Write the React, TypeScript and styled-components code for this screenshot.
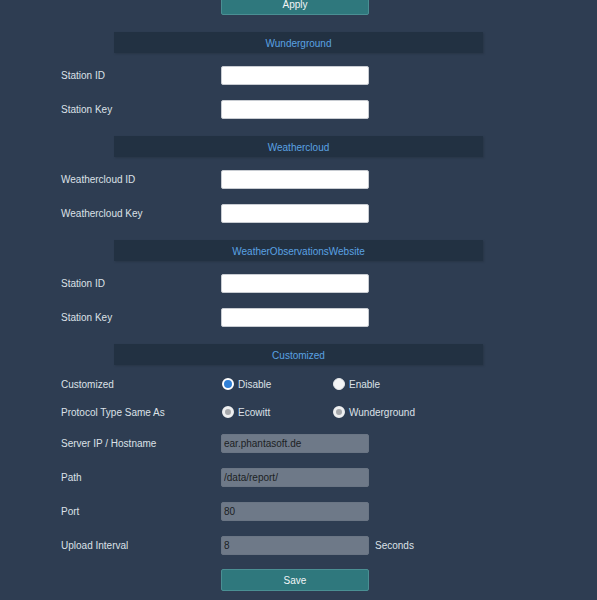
import React from "react";
import styled, { createGlobalStyle } from "styled-components";

const Global = createGlobalStyle`
  html, body {
    margin: 0;
    padding: 0;
    background: #2e3d52;
    overflow: hidden;
  }
  body {
    font-family: "Liberation Sans", Arial, sans-serif;
    font-size: 10px;
    color: #d9dee5;
  }
`;

const Page = styled.div`
  width: 476px;
  margin: 0 auto;
  padding-left: 1px;
  display: flex;
  flex-direction: column;
`;

const Button = styled.button<{ $top?: number }>`
  margin-left: 160px;
  margin-top: ${(p) => p.$top ?? 0}px;
  width: 148px;
  height: 22px;
  background: #2f787d;
  border: 1px solid #4a8f93;
  border-radius: 2px;
  color: #f2f5f7;
  font-family: "Liberation Sans", Arial, sans-serif;
  font-size: 10px;
  padding: 0;
`;

const Section = styled.section<{ $top: number }>`
  margin-top: ${(p) => p.$top}px;
  display: flex;
  flex-direction: column;
`;

const Header = styled.div`
  margin-left: 53px;
  width: 369px;
  height: 21px;
  background: #223142;
  box-shadow: 1px 1px 2px rgba(0, 0, 0, 0.15);
  color: #5aa2e2;
  display: flex;
  align-items: center;
  justify-content: center;
  padding-top: 1px;
  box-sizing: border-box;
  margin-bottom: 5px;
`;

const Row = styled.div<{ $h?: number }>`
  display: grid;
  grid-template-columns: 160px 148px auto;
  align-items: center;
  height: ${(p) => p.$h ?? 34}px;
`;

const Label = styled.span`
  color: #dce1e7;
`;

const Input = styled.input<{ $filled?: boolean }>`
  box-sizing: border-box;
  width: 148px;
  height: 19px;
  margin: 0;
  padding: 0 2px;
  border: 1px solid ${(p) => (p.$filled ? "#6a7584" : "#c8ccd2")};
  border-radius: 2px;
  background: ${(p) => (p.$filled ? "#6e7988" : "#ffffff")};
  color: #1c1f24;
  font-family: "Liberation Sans", Arial, sans-serif;
  font-size: 10px;
  outline: none;
`;

const Suffix = styled.span`
  margin-left: 6px;
  color: #dce1e7;
`;

const RadioGroup = styled.div`
  display: flex;
  align-items: center;
  grid-column: 2 / span 2;
`;

const RadioOption = styled.label`
  display: flex;
  align-items: center;
  width: 111px;
  gap: 4px;
  color: #dce1e7;
`;

const RadioDot = styled.span<{ $state: "on" | "off" | "dim" }>`
  box-sizing: border-box;
  width: 12px;
  height: 12px;
  border-radius: 50%;
  margin-left: 1px;
  background: ${(p) =>
    p.$state === "on" ? "#2f7fd6" : p.$state === "dim" ? "#a6a8ab" : "#f4f5f6"};
  border: ${(p) =>
    p.$state === "on"
      ? "2px solid #ffffff"
      : p.$state === "dim"
      ? "3px solid #eeeff0"
      : "1px solid #e6e8ea"};
`;

type Field = { label: string; value?: string; suffix?: string };

const FieldRow = ({ label, value, suffix }: Field) => (
  <Row>
    <Label>{label}</Label>
    <Input $filled={value !== undefined} defaultValue={value ?? ""} readOnly={value !== undefined} />
    {suffix ? <Suffix>{suffix}</Suffix> : <span />}
  </Row>
);

const Radio = ({ label, state }: { label: string; state: "on" | "off" | "dim" }) => (
  <RadioOption>
    <RadioDot $state={state} />
    {label}
  </RadioOption>
);

export default function App() {
  return (
    <>
      <Global />
      <Page>
        <Button $top={-7}>Apply</Button>
        <Section $top={17}>
          <Header>Wunderground</Header>
          <FieldRow label="Station ID" />
          <FieldRow label="Station Key" />
        </Section>
        <Section $top={10}>
          <Header>Weathercloud</Header>
          <FieldRow label="Weathercloud ID" />
          <FieldRow label="Weathercloud Key" />
        </Section>
        <Section $top={10}>
          <Header>WeatherObservationsWebsite</Header>
          <FieldRow label="Station ID" />
          <FieldRow label="Station Key" />
        </Section>
        <Section $top={10}>
          <Header>Customized</Header>
          <Row $h={28}>
            <Label>Customized</Label>
            <RadioGroup>
              <Radio label="Disable" state="on" />
              <Radio label="Enable" state="off" />
            </RadioGroup>
          </Row>
          <Row $h={28}>
            <Label>Protocol Type Same As</Label>
            <RadioGroup>
              <Radio label="Ecowitt" state="dim" />
              <Radio label="Wunderground" state="dim" />
            </RadioGroup>
          </Row>
          <FieldRow label="Server IP / Hostname" value="ear.phantasoft.de" />
          <FieldRow label="Path" value="/data/report/" />
          <FieldRow label="Port" value="80" />
          <FieldRow label="Upload Interval" value="8" suffix="Seconds" />
        </Section>
        <Button $top={7}>Save</Button>
      </Page>
    </>
  );
}
